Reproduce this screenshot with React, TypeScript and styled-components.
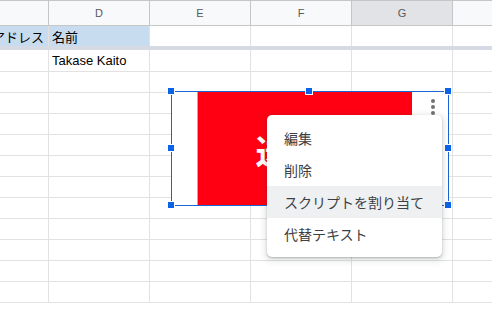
import styled, { createGlobalStyle } from 'styled-components';

const GlobalStyle = createGlobalStyle`
  html, body {
    margin: 0;
    padding: 0;
    background: #fff;
    overflow: hidden;
  }
  body {
    font-family: 'Liberation Sans', Arial, 'Noto Sans CJK JP', sans-serif;
  }
`;

// column widths include the 1px right border
const columns = [
  { key: 'C', width: 49 },
  { key: 'D', width: 101 },
  { key: 'E', width: 101 },
  { key: 'F', width: 101 },
  { key: 'G', width: 101, selected: true },
  { key: 'H', width: 101 },
];

const Sheet = styled.div`
  position: relative;
  width: 492px;
  height: 311px;
  overflow: hidden;
  background: #fff;
`;

const HeaderRow = styled.div`
  display: flex;
  height: 26px;
  box-sizing: border-box;
  border-top: 1px solid #c4c7c5;
  border-bottom: 1px solid #c4c7c5;
`;

const HeaderCell = styled.div<{ $w: number; $selected?: boolean }>`
  flex: 0 0 ${(p) => p.$w}px;
  box-sizing: border-box;
  border-right: 1px solid #c4c7c5;
  background: ${(p) => (p.$selected ? '#e1e3e6' : '#f8f9fa')};
  color: #575a5e;
  font-size: 11px;
  display: flex;
  align-items: center;
  justify-content: center;
`;

const Row = styled.div<{ $h: number; $line?: boolean }>`
  display: flex;
  height: ${(p) => p.$h}px;
  box-sizing: border-box;
  border-bottom: ${(p) => (p.$line ? '1px solid #e2e2e2' : 'none')};
`;

const FrozenBar = styled.div`
  height: 4px;
  background: #d6dae4;
`;

const Cell = styled.div<{ $w: number; $fill?: string; $right?: boolean }>`
  flex: 0 0 ${(p) => p.$w}px;
  box-sizing: border-box;
  border-right: 1px solid #e2e2e2;
  background: ${(p) => p.$fill || 'transparent'};
  font-size: 13px;
  color: #000;
  display: flex;
  align-items: center;
  justify-content: ${(p) => (p.$right ? 'flex-end' : 'flex-start')};
  padding: ${(p) => (p.$right ? '0 4px 0 0' : '0 0 0 3px')};
  overflow: hidden;
  white-space: nowrap;
`;

const Frame = styled.div`
  position: absolute;
  left: 171px;
  top: 91px;
  width: 278px;
  height: 115px;
  box-sizing: border-box;
  border: 1px solid #1a66d6;
  background: #fff;
`;

const Picture = styled.div`
  position: absolute;
  left: 25px;
  top: 0;
  width: 215px;
  bottom: 0;
  background: #ff0013;
  border-left: 1px solid #ff8a95;
  box-sizing: border-box;
  display: flex;
  align-items: center;
  justify-content: center;
  color: #fff;
  font-family: 'Noto Sans CJK JP', sans-serif;
  font-weight: 700;
  font-size: 33px;
  padding-top: 2px;
`;

const Kebab = styled.div`
  position: absolute;
  left: 259px;
  top: 7px;
  display: flex;
  flex-direction: column;
  gap: 2px;
`;

const Dot = styled.span`
  width: 4px;
  height: 4px;
  border-radius: 50%;
  background: #6f7277;
`;

const Handle = styled.div<{ $x: number; $y: number }>`
  position: absolute;
  left: ${(p) => p.$x - 4}px;
  top: ${(p) => p.$y - 4}px;
  width: 8px;
  height: 8px;
  box-sizing: border-box;
  background: #0b63e6;
  border: 1px solid #fff;
`;

const Menu = styled.div`
  position: absolute;
  left: 267px;
  top: 115px;
  width: 175px;
  padding: 7px 0;
  background: #fff;
  border-radius: 5px;
  box-shadow: 0 1px 2px rgba(60, 64, 67, 0.3), 0 2px 6px 2px rgba(60, 64, 67, 0.15);
`;

const MenuItem = styled.div<{ $active?: boolean }>`
  height: 32px;
  display: flex;
  align-items: center;
  padding-left: 17px;
  font-family: 'Noto Sans CJK JP', sans-serif;
  font-size: 14px;
  color: #3c4043;
  background: ${(p) => (p.$active ? '#eff0f2' : 'transparent')};
`;

const handles = [
  [171, 91],
  [309, 91],
  [448, 91],
  [171, 148],
  [448, 148],
  [171, 205],
  [309, 205],
  [448, 205],
];

export default function App() {
  const emptyRows = Array.from({ length: 11 });

  return (
    <>
      <GlobalStyle />
      <Sheet>
        <HeaderRow>
          {columns.map((c) => (
            <HeaderCell key={c.key} $w={c.width} $selected={c.selected}>
              {c.key === 'C' ? '' : c.key}
            </HeaderCell>
          ))}
        </HeaderRow>
        <Row $h={20}>
          {columns.map((c) => (
            <Cell
              key={c.key}
              $w={c.width}
              $right={c.key === 'C'}
              $fill={c.key === 'C' || c.key === 'D' ? '#c8dcf0' : undefined}
            >
              {c.key === 'C' && 'メールアドレス'}
              {c.key === 'D' && '名前'}
            </Cell>
          ))}
        </Row>
        <FrozenBar />
        <Row $h={22} $line>
          {columns.map((c) => (
            <Cell key={c.key} $w={c.width}>
              {c.key === 'D' && 'Takase Kaito'}
            </Cell>
          ))}
        </Row>
        {emptyRows.map((_, i) => (
          <Row key={i} $h={21} $line>
            {columns.map((c) => (
              <Cell key={c.key} $w={c.width} />
            ))}
          </Row>
        ))}

        <Frame>
          <Picture>送信！</Picture>
          <Kebab>
            <Dot />
            <Dot />
            <Dot />
          </Kebab>
        </Frame>
        {handles.map(([x, y]) => (
          <Handle key={`${x}-${y}`} $x={x} $y={y} />
        ))}

        <Menu>
          <MenuItem>編集</MenuItem>
          <MenuItem>削除</MenuItem>
          <MenuItem $active>スクリプトを割り当て</MenuItem>
          <MenuItem>代替テキスト</MenuItem>
        </Menu>
      </Sheet>
    </>
  );
}
